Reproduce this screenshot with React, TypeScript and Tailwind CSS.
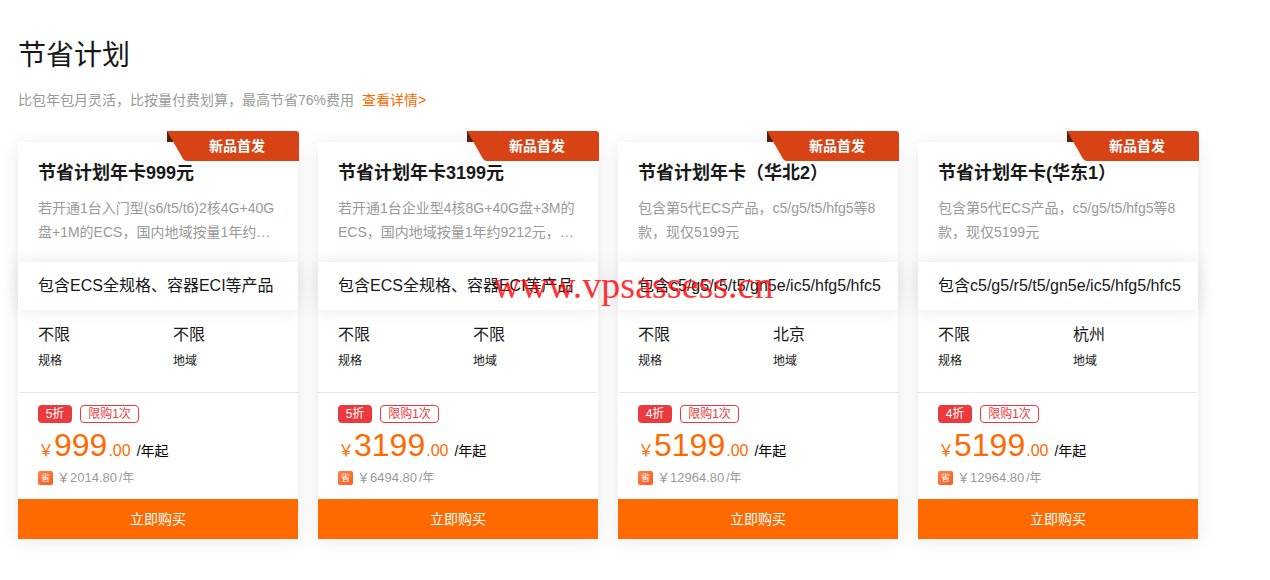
interface Plan {
  id: string
  title: string
  description: string
  scope: string
  region: string
  discount: string
  price: string
  originalPrice: string
}

const plans: Plan[] = [
  {
    id: "card-999",
    title: "节省计划年卡999元",
    description: "若开通1台入门型(s6/t5/t6)2核4G+40G盘+1M的ECS，国内地域按量1年约…",
    scope: "包含ECS全规格、容器ECI等产品",
    region: "不限",
    discount: "5折",
    price: "999",
    originalPrice: "2014.80",
  },
  {
    id: "card-3199",
    title: "节省计划年卡3199元",
    description: "若开通1台企业型4核8G+40G盘+3M的ECS，国内地域按量1年约9212元，…",
    scope: "包含ECS全规格、容器ECI等产品",
    region: "不限",
    discount: "5折",
    price: "3199",
    originalPrice: "6494.80",
  },
  {
    id: "card-huabei2",
    title: "节省计划年卡（华北2）",
    description: "包含第5代ECS产品，c5/g5/t5/hfg5等8款，现仅5199元",
    scope: "包含c5/g5/r5/t5/gn5e/ic5/hfg5/hfc5",
    region: "北京",
    discount: "4折",
    price: "5199",
    originalPrice: "12964.80",
  },
  {
    id: "card-huadong1",
    title: "节省计划年卡(华东1）",
    description: "包含第5代ECS产品，c5/g5/t5/hfg5等8款，现仅5199元",
    scope: "包含c5/g5/r5/t5/gn5e/ic5/hfg5/hfc5",
    region: "杭州",
    discount: "4折",
    price: "5199",
    originalPrice: "12964.80",
  },
]

function Ribbon({ label }: { label: string }) {
  return (
    <div className="absolute -top-[11px] -right-px h-[30px] w-[132px]">
      <svg className="absolute inset-0" width="132" height="30" viewBox="0 0 132 30" aria-hidden="true">
        <path d="M0 0h8v11H0z" fill="#4f2013" />
        <path d="M0 0h129q3 0 3 3v27H20q-3 0-4.500-3z" fill="#d74315" />
      </svg>
      <span className="relative block pl-[42px] text-sm leading-[30px] font-bold text-white">{label}</span>
    </div>
  )
}

function PlanCard({ plan }: { plan: Plan }) {
  return (
    <article className="relative flex flex-col bg-white shadow-[0_2px_18px_rgba(0,0,0,0.09)]">
      <Ribbon label="新品首发" />

      <div className="h-[120px] px-5 pt-[18px]">
        <h2 className="text-lg leading-[26px] font-bold whitespace-nowrap">{plan.title}</h2>
        <p className="mt-[10px] line-clamp-2 text-sm leading-6 text-[#999]">{plan.description}</p>
      </div>

      <div className="relative px-5 text-base leading-[48px] whitespace-nowrap shadow-[0_0_18px_rgba(0,0,0,0.1)]">
        {plan.scope}
      </div>

      {/* Specs */}
      <dl className="grid h-[83px] grid-cols-[135px_1fr] border-b border-[#e8e8e8] px-5 pt-3">
        <div className="flex flex-col-reverse justify-end">
          <dt className="text-xs leading-[26px]">规格</dt>
          <dd className="text-base leading-[26px]">不限</dd>
        </div>
        <div className="flex flex-col-reverse justify-end">
          <dt className="text-xs leading-[26px]">地域</dt>
          <dd className="text-base leading-[26px]">{plan.region}</dd>
        </div>
      </dl>

      {/* Price */}
      <div className="h-[106px] px-5 pt-3">
        <div className="flex gap-2 text-center text-xs">
          <span className="h-[18px] min-w-[34px] rounded bg-[#eb3a3e] leading-[18px] text-white">{plan.discount}</span>
          <span className="h-[18px] min-w-[59px] rounded border border-[#eb3a3e] leading-4 text-[#eb3a3e]">
            限购1次
          </span>
        </div>
        <div className="flex items-baseline leading-[44px] text-[#ff6a00]">
          <span className="text-base">￥</span>
          <span className="text-[32px]">{plan.price}</span>
          <span className="ml-px text-base">.00</span>
          <span className="ml-1.5 text-sm text-black">/年起</span>
        </div>
        <div className="flex items-center text-[13px] leading-[22px] text-[#999]">
          <span className="mr-1 h-[14px] w-[15px] rounded-xs bg-linear-to-br from-[#ff8243] to-[#ff5a1f] text-center text-[9px] leading-[14px] text-white">
            省
          </span>
          <span>￥{plan.originalPrice}</span>
          <span className="ml-0.5 text-xs">/年</span>
        </div>
      </div>

      <button type="button" className="h-10 w-full cursor-pointer bg-[#ff6a00] text-sm text-white hover:bg-[#f56600]">
        立即购买
      </button>
    </article>
  )
}

export default function App() {
  return (
    <main className="relative bg-white px-[18px] pt-9 pb-10 font-['Liberation_Sans','Noto_Sans_CJK_SC',sans-serif] text-[#181818]">
      <h1 className="text-[28px] leading-10">节省计划</h1>
      <p className="mt-3 text-sm leading-6 text-[#999]">
        比包年包月灵活，比按量付费划算，最高节省76%费用
        <a href="#detail" className="ml-2 text-[#ff6a00]">
          查看详情&gt;
        </a>
      </p>

      <section className="mt-[30px] grid max-w-[1180px] grid-cols-4 gap-5">
        {plans.map((plan) => (
          <PlanCard key={plan.id} plan={plan} />
        ))}
      </section>

      {/* Site watermark */}
      <span className="pointer-events-none absolute top-[263px] left-[493px] font-['Liberation_Serif',serif] text-[38px] leading-[44px] text-[#ff0000]/80">
        www.vpsassess.cn
      </span>
    </main>
  )
}
